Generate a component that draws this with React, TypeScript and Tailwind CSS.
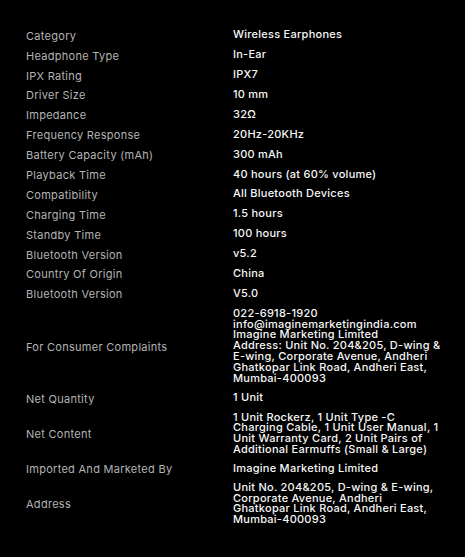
import React from "react";

const rows: [string, string[]][] = [
  ["Category", ["Wireless Earphones"]],
  ["Headphone Type", ["In-Ear"]],
  ["IPX Rating", ["IPX7"]],
  ["Driver Size", ["10 mm"]],
  ["Impedance", ["32Ω"]],
  ["Frequency Response", ["20Hz-20KHz"]],
  ["Battery Capacity (mAh)", ["300 mAh"]],
  ["Playback Time", ["40 hours (at 60% volume)"]],
  ["Compatibility", ["All Bluetooth Devices"]],
  ["Charging Time", ["1.5 hours"]],
  ["Standby Time", ["100 hours"]],
  ["Bluetooth Version", ["v5.2"]],
  ["Country Of Origin", ["China"]],
  ["Bluetooth Version", ["V5.0"]],
  [
    "For Consumer Complaints",
    [
      "022-6918-1920",
      "info@imaginemarketingindia.com",
      "Imagine Marketing Limited",
      "Address: Unit No. 204&205, D-wing &",
      "E-wing, Corporate Avenue, Andheri",
      "Ghatkopar Link Road, Andheri East,",
      "Mumbai-400093",
    ],
  ],
  ["Net Quantity", ["1 Unit"]],
  [
    "Net Content",
    [
      "1 Unit Rockerz, 1 Unit Type -C",
      "Charging Cable, 1 Unit User Manual, 1",
      "Unit Warranty Card, 2 Unit Pairs of",
      "Additional Earmuffs (Small & Large)",
    ],
  ],
  ["Imported And Marketed By", ["Imagine Marketing Limited"]],
  [
    "Address",
    [
      "Unit No. 204&205, D-wing & E-wing,",
      "Corporate Avenue, Andheri",
      "Ghatkopar Link Road, Andheri East,",
      "Mumbai-400093",
    ],
  ],
];

export default function App() {
  return (
    <div
      className="w-[465px] h-[557px] bg-black pt-[25.5px] pl-[26px]"
      style={{ fontFamily: "Inter, 'Liberation Sans', sans-serif" }}
    >
      <div className="flex flex-col">
        {rows.map(([label, value], i) => (
          <div key={i} className="flex items-center">
            <div className="w-[207px] shrink-0 text-[11px] leading-[10.8px] tracking-[0.28px] text-[#b4b4b4] pt-[5.3px] pb-[3.8px]">
              {label}
            </div>
            <div
              className={
                value.length === 4
                  ? "flex flex-col text-[11px] leading-[10.8px] tracking-[0.25px] font-medium text-[#f7f7f7] pt-[3px] pb-[4.1px] whitespace-nowrap"
                  : "flex flex-col text-[11px] leading-[10.8px] tracking-[0.25px] font-medium text-[#f7f7f7] pt-[3.8px] pb-[5.3px] whitespace-nowrap"
              }
            >
              {value.map((v, j) => (
                <span key={j}>{v}</span>
              ))}
            </div>
          </div>
        ))}
      </div>
    </div>
  );
}
